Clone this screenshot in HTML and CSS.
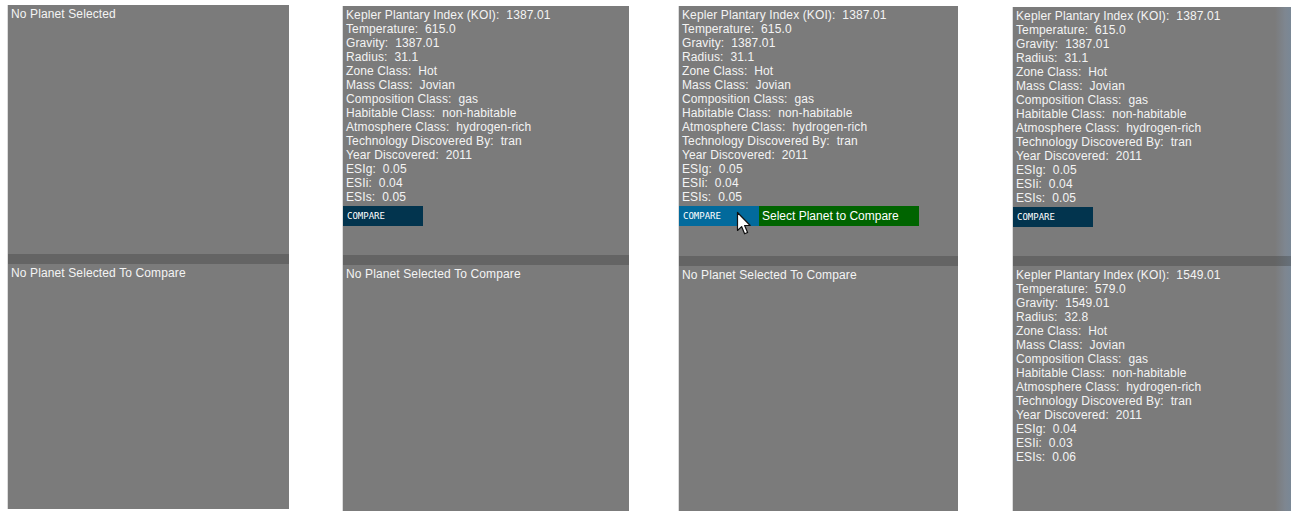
FILE: index.html
```html
<!DOCTYPE html>
<html>
<head>
<meta charset="utf-8">
<link rel="stylesheet" href="styles.css">
</head>
<body>
<div class="row">
  <div class="panel p1">
    <div class="top t1"><div class="line">No Planet Selected</div></div>
    <div class="divider"></div>
    <div class="bottom b1"><div class="line">No Planet Selected To Compare</div></div>
  </div>

  <div class="panel p2">
    <div class="top t2">
      <div class="line">Kepler Plantary Index (KOI):  1387.01</div>
      <div class="line">Temperature:  615.0</div>
      <div class="line">Gravity:  1387.01</div>
      <div class="line">Radius:  31.1</div>
      <div class="line">Zone Class:  Hot</div>
      <div class="line">Mass Class:  Jovian</div>
      <div class="line">Composition Class:  gas</div>
      <div class="line">Habitable Class:  non-habitable</div>
      <div class="line">Atmosphere Class:  hydrogen-rich</div>
      <div class="line">Technology Discovered By:  tran</div>
      <div class="line">Year Discovered:  2011</div>
      <div class="line">ESIg:  0.05</div>
      <div class="line">ESIi:  0.04</div>
      <div class="line">ESIs:  0.05</div>
      <div class="btnrow"><div class="btn">COMPARE</div></div>
    </div>
    <div class="divider"></div>
    <div class="bottom b2"><div class="line">No Planet Selected To Compare</div></div>
  </div>

  <div class="panel p3">
    <div class="top t3">
      <div class="line">Kepler Plantary Index (KOI):  1387.01</div>
      <div class="line">Temperature:  615.0</div>
      <div class="line">Gravity:  1387.01</div>
      <div class="line">Radius:  31.1</div>
      <div class="line">Zone Class:  Hot</div>
      <div class="line">Mass Class:  Jovian</div>
      <div class="line">Composition Class:  gas</div>
      <div class="line">Habitable Class:  non-habitable</div>
      <div class="line">Atmosphere Class:  hydrogen-rich</div>
      <div class="line">Technology Discovered By:  tran</div>
      <div class="line">Year Discovered:  2011</div>
      <div class="line">ESIg:  0.05</div>
      <div class="line">ESIi:  0.04</div>
      <div class="line">ESIs:  0.05</div>
      <div class="btnrow">
        <div class="btn btn-hover">COMPARE
          <svg class="cursor" width="16" height="26" viewBox="0 0 16 26">
            <path d="M1.5 1.5 L1.5 19.5 L5.6 15.6 L8.6 22.8 L11.6 21.5 L8.6 14.5 L14.2 14.5 Z" fill="#fff" stroke="#111" stroke-width="1.2" stroke-linejoin="round"/>
          </svg>
        </div>
        <div class="tip">Select Planet to Compare</div>
      </div>
    </div>
    <div class="divider"></div>
    <div class="bottom b3"><div class="line">No Planet Selected To Compare</div></div>
  </div>

  <div class="panel p4">
    <div class="top t4">
      <div class="line">Kepler Plantary Index (KOI):  1387.01</div>
      <div class="line">Temperature:  615.0</div>
      <div class="line">Gravity:  1387.01</div>
      <div class="line">Radius:  31.1</div>
      <div class="line">Zone Class:  Hot</div>
      <div class="line">Mass Class:  Jovian</div>
      <div class="line">Composition Class:  gas</div>
      <div class="line">Habitable Class:  non-habitable</div>
      <div class="line">Atmosphere Class:  hydrogen-rich</div>
      <div class="line">Technology Discovered By:  tran</div>
      <div class="line">Year Discovered:  2011</div>
      <div class="line">ESIg:  0.05</div>
      <div class="line">ESIi:  0.04</div>
      <div class="line">ESIs:  0.05</div>
      <div class="btnrow"><div class="btn">COMPARE</div></div>
    </div>
    <div class="divider"></div>
    <div class="bottom b4">
      <div class="line">Kepler Plantary Index (KOI):  1549.01</div>
      <div class="line">Temperature:  579.0</div>
      <div class="line">Gravity:  1549.01</div>
      <div class="line">Radius:  32.8</div>
      <div class="line">Zone Class:  Hot</div>
      <div class="line">Mass Class:  Jovian</div>
      <div class="line">Composition Class:  gas</div>
      <div class="line">Habitable Class:  non-habitable</div>
      <div class="line">Atmosphere Class:  hydrogen-rich</div>
      <div class="line">Technology Discovered By:  tran</div>
      <div class="line">Year Discovered:  2011</div>
      <div class="line">ESIg:  0.04</div>
      <div class="line">ESIi:  0.03</div>
      <div class="line">ESIs:  0.06</div>
    </div>
  </div>
</div>
</body>
</html>
```
FILE: styles.css
```css
html, body {
  margin: 0;
  padding: 0;
  background: #ffffff;
}
body {
  font-family: "Liberation Sans", Arial, sans-serif;
  font-size: 12px;
  color: #f4f4f4;
}
.row {
  display: flex;
  align-items: flex-start;
  padding-left: 7px;
}
.panel {
  display: flex;
  flex-direction: column;
  border-left: 1px solid #dcdcdc;
  background: #7b7b7b;
}
.p1 { width: 281px; margin-top: 5px; }
.p2 { width: 286px; margin-top: 6px; margin-left: 53px; }
.p3 { width: 279px; margin-top: 6px; margin-left: 49px; }
.p4 {
  width: 278px;
  margin-top: 7px;
  margin-left: 54px;
  background: linear-gradient(to right, #7b7b7b 0, #7b7b7b 262px, #7e8690 272px, #7a8896 278px);
}
.top {
  padding: 2px 0 0 3px;
  box-sizing: border-box;
}
.t1 { height: 249px; }
.t2 { height: 249px; }
.t3 { height: 250px; }
.t4 { height: 249px; }
.divider {
  height: 10px;
  background: #646464;
}
.p4 .divider {
  background: linear-gradient(to right, #646464 0, #646464 262px, #66707a 278px);
}
.bottom {
  padding: 2px 0 0 3px;
  box-sizing: border-box;
}
.b1 { height: 245px; }
.b2 { height: 246px; }
.b3 { height: 245px; }
.b4 { height: 245px; }
.line {
  white-space: pre;
  line-height: 14px;
  height: 14px;
  letter-spacing: 0.12px;
}
.btnrow {
  display: flex;
  margin-left: -3px;
  margin-top: 2px;
}
.btn {
  position: relative;
  width: 80px;
  height: 20px;
  box-sizing: border-box;
  padding-left: 4px;
  background: #02344e;
  color: #ffffff;
  font-family: "DejaVu Sans Mono", monospace;
  font-size: 9px;
  line-height: 20px;
}
.btn-hover {
  background: #026a9c;
}
.tip {
  width: 160px;
  height: 20px;
  box-sizing: border-box;
  padding-left: 3px;
  background: #006400;
  color: #ffffff;
  font-size: 12px;
  line-height: 20px;
}
.cursor {
  position: absolute;
  left: 57px;
  top: 5px;
}
```
